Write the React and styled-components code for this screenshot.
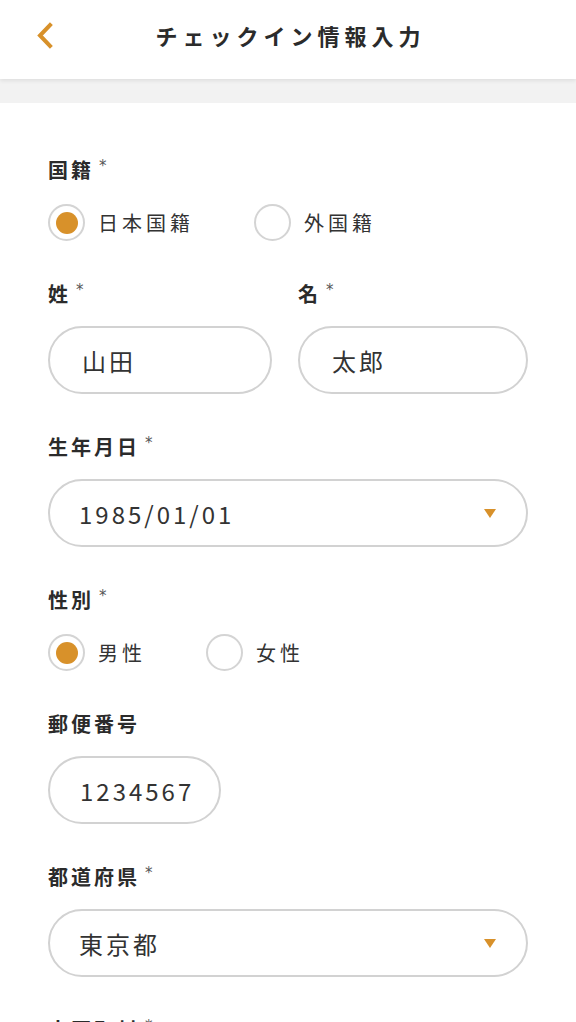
import styled, { createGlobalStyle } from "styled-components"

const GlobalStyle = createGlobalStyle`
    * { box-sizing: border-box; }
    body {
        margin: 0;
        background: #ffffff;
        font-family: "Noto Sans CJK JP", "Noto Sans", sans-serif;
        color: #333333;
    }
`

const ORANGE = "#D8912A"

const Field = ({label, required, children}) => (
    <FieldBox>
        <Label>
            {label}
            {required && <Star>*</Star>}
        </Label>
        {children}
    </FieldBox>
)

const RadioGroup = ({options, selected}) => (
    <Radios>
        {options.map((opt) => (
            <RadioOption key={opt}>
                <Circle $checked={opt === selected} />
                <span>{opt}</span>
            </RadioOption>
        ))}
    </Radios>
)

const Select = ({value}) => (
    <SelectBox>
        <span>{value}</span>
        <svg width="12" height="9" viewBox="0 0 12 9">
            <polygon points="0,0 12,0 6,9" fill={ORANGE} />
        </svg>
    </SelectBox>
)

const App = () => {
    return (
        <Page>
            <GlobalStyle />
            <Header>
                <Back aria-label="戻る">
                    <svg width="18" height="27" viewBox="0 0 18 27">
                        <polyline points="14,3 4,13.5 14,24" fill="none" stroke={ORANGE} strokeWidth="4" strokeLinecap="square" />
                    </svg>
                </Back>
                <Title>チェックイン情報入力</Title>
            </Header>
            <Band />
            <Form>
                <Field label="国籍" required>
                    <RadioGroup options={["日本国籍", "外国籍"]} selected="日本国籍" />
                </Field>
                <NameRow>
                    <Field label="姓" required>
                        <TextInput defaultValue="山田" />
                    </Field>
                    <Field label="名" required>
                        <TextInput defaultValue="太郎" />
                    </Field>
                </NameRow>
                <Field label="生年月日" required>
                    <Select value="1985/01/01" />
                </Field>
                <Field label="性別" required>
                    <RadioGroup options={["男性", "女性"]} selected="男性" />
                </Field>
                <Field label="郵便番号">
                    <TextInput defaultValue="1234567" $width="173px" $pad="30px" />
                </Field>
                <Field label="都道府県" required>
                    <Select value="東京都" />
                </Field>
                <Field label="市区町村" required>
                    <TextInput defaultValue="" />
                </Field>
            </Form>
        </Page>
    )
}

export default App

const Page = styled.div`
    width: 100%;
    min-height: 100vh;
    background: #ffffff;
`
const Header = styled.header`
    position: relative;
    z-index: 1;
    height: 79px;
    padding-bottom: 9px;
    display: flex;
    align-items: center;
    justify-content: center;
    background: #ffffff;
    box-shadow: 0 2px 4px rgba(0, 0, 0, 0.08);
`
const Back = styled.button`
    position: absolute;
    left: 36px;
    top: 22px;
    padding: 0;
    border: none;
    background: none;
    line-height: 0;
`
const Title = styled.h1`
    margin: 0;
    font-size: 22px;
    font-weight: 700;
    letter-spacing: 5px;
    color: #2b2b2b;
    padding-left: 5px;
`
const Band = styled.div`
    height: 24px;
    background: #f2f2f2;
`
const Form = styled.div`
    padding: 55px 48px 0 48px;
    display: flex;
    flex-direction: column;
    gap: 41px;
`
const FieldBox = styled.div`
    display: flex;
    flex-direction: column;
    gap: 20px;
    min-width: 0;
`
const Label = styled.div`
    height: 24px;
    line-height: 24px;
    font-size: 20px;
    font-weight: 700;
    letter-spacing: 3px;
    color: #2b2b2b;
    white-space: nowrap;
`
const Star = styled.span`
    font-family: "DejaVu Sans", sans-serif;
    font-size: 15px;
    font-weight: 400;
    color: #555555;
    margin-left: 5px;
    vertical-align: top;
    line-height: 16px;
`
const Radios = styled.div`
    display: flex;
    gap: 60px;
    margin-top: 2px;
`
const RadioOption = styled.label`
    display: flex;
    align-items: center;
    gap: 13px;
    font-size: 20px;
    letter-spacing: 4px;
    color: #333333;
`
const Circle = styled.span`
    width: 37px;
    height: 37px;
    border-radius: 50%;
    border: 2px solid #d4d4d4;
    display: flex;
    align-items: center;
    justify-content: center;
    &::after {
        content: "";
        width: 22px;
        height: 22px;
        border-radius: 50%;
        background: ${ORANGE};
        display: ${(p) => (p.$checked ? "block" : "none")};
    }
`
const NameRow = styled.div`
    display: grid;
    grid-template-columns: 224px 1fr;
    gap: 26px;
`
const TextInput = styled.input`
    width: ${(p) => p.$width || "100%"};
    height: 68px;
    border: 2px solid #d2d2d2;
    border-radius: 34px;
    padding: 0 16px 0 ${(p) => p.$pad || "32px"};
    font-family: "Noto Sans CJK JP", "Noto Sans", sans-serif;
    font-size: 24px;
    letter-spacing: 3px;
    color: #333333;
    background: #ffffff;
    outline: none;
`
const SelectBox = styled.div`
    height: 68px;
    border: 2px solid #d2d2d2;
    border-radius: 34px;
    padding: 0 30px 0 29px;
    display: flex;
    align-items: center;
    justify-content: space-between;
    font-size: 24px;
    letter-spacing: 3px;
    color: #333333;
`
